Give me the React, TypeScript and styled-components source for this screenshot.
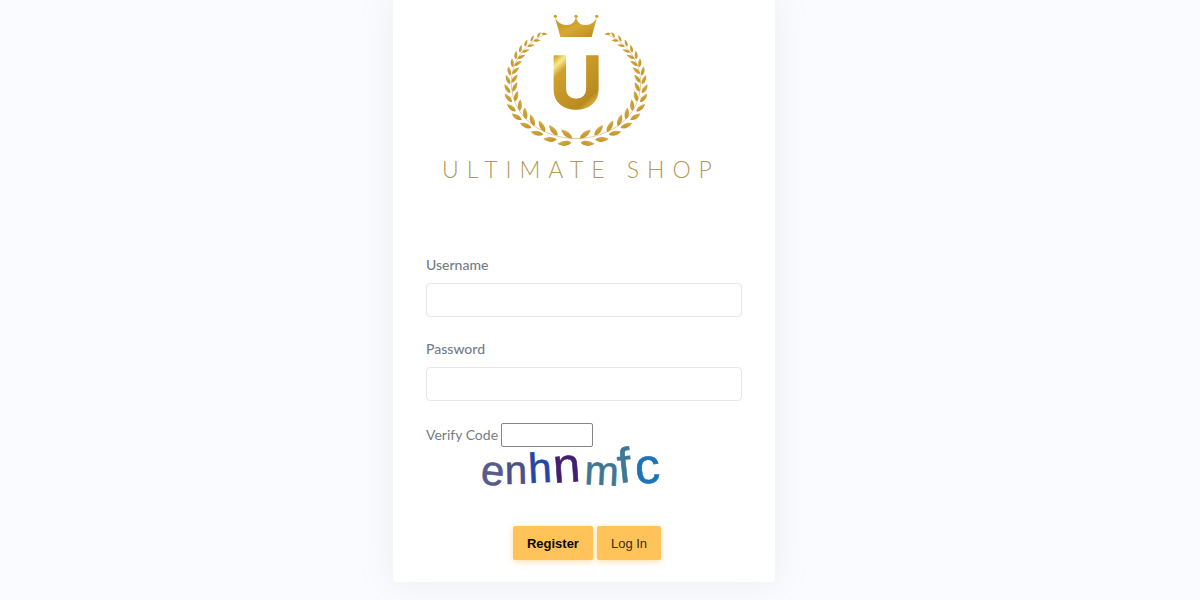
import React from "react";
import styled, { createGlobalStyle } from "styled-components";

const GlobalStyle = createGlobalStyle`
  *, *::before, *::after { box-sizing: border-box; }
  body {
    margin: 0;
    background: #fafbfe;
    color: #757d85;
    font-family: Lato, "Open Sans", sans-serif;
    font-size: 14px;
  }
`;

const Page = styled.main`
  display: flex;
  justify-content: center;
  padding: 0 32px 18px 0;
`;

const Card = styled.section`
  width: 100%;
  max-width: 382px;
  padding: 0 33px 22px;
  background: #fff;
  border-radius: 0 0 4px 4px;
  box-shadow: 0 0 35px rgba(154, 161, 171, 0.15);
`;

const Brand = styled.header`
  display: flex;
  flex-direction: column;
  align-items: center;
  max-width: 300px;
  margin-bottom: 72px;
`;

const EmblemArt = styled.svg`
  display: block;
  width: 174px;
  height: 150px;
`;

const BrandName = styled.h1`
  margin: 5px 0 0;
  padding-left: 10px;
  color: #b09a5c;
  font-family: Lato, sans-serif;
  font-size: 23px;
  font-weight: 300;
  letter-spacing: 8px;
  line-height: 28px;
  white-space: nowrap;
`;

const Field = styled.div`
  display: flex;
  flex-direction: column;
  gap: 8px;
  margin-bottom: 22px;
`;

const Label = styled.label<{ $light?: boolean }>`
  font-weight: ${(p) => (p.$light ? 400 : 500)};
  line-height: 20px;
`;

const TextInput = styled.input`
  width: 100%;
  height: 34px;
  padding: 6px 12px;
  border: 1px solid #e3e6ea;
  border-radius: 4px;
  background: #fff;
  color: #6c757d;
  font: inherit;
`;

const VerifyRow = styled.div`
  display: flex;
  align-items: center;
  gap: 3px;
`;

const CodeInput = styled.input`
  width: 92px;
  height: 24px;
  padding: 1px 4px;
  border: 1px solid #858585;
  border-radius: 2px;
  background: #fff;
  font: inherit;
`;

const CaptchaArt = styled.svg`
  display: block;
  overflow: visible;
  width: 184px;
  height: 44px;
  margin: 0 0 35px 54px;
  font-family: "Liberation Sans", Arial, sans-serif;
`;

const Actions = styled.div`
  display: flex;
  justify-content: center;
  gap: 4px;
  padding-left: 6px;
`;

const Button = styled.button<{ $strong?: boolean }>`
  height: 34px;
  padding: 0 14px;
  border: 0;
  border-radius: 2px;
  background: #ffc35a;
  box-shadow: 0 2px 6px rgba(255, 195, 90, 0.5);
  color: ${(p) => (p.$strong ? "#0c0800" : "#3a2c14")};
  font-family: "Liberation Sans", Arial, sans-serif;
  font-size: 13px;
  font-weight: ${(p) => (p.$strong ? 700 : 400)};
`;

/* Leaf centres along the left branch, from the foot of the wreath to its tip. */
const OUTER = [
  [225, 430], [182, 418], [143, 399], [109, 376], [82, 350], [66, 323], [57, 294], [54, 266],
  [56, 239], [60, 213], [69, 188], [80, 165], [94, 146], [110, 129], [129, 115], [149, 104],
];
const INNER = [
  [232, 402], [192, 391], [158, 379], [129, 361], [108, 340], [92, 315], [81, 288], [77, 261],
  [76, 236], [79, 212], [86, 190], [96, 171], [109, 153], [125, 137], [143, 122], [165, 102],
];

function leaf([x, y]: number[], index: number, turn: number) {
  const t = Math.atan2((y - 250) / 166, (x - 260) / 195);
  const angle = (Math.atan2(166 * Math.cos(t), -195 * Math.sin(t)) * 180) / Math.PI + turn;
  const h = 21 - index * 0.75;
  const w = h * 0.38;
  return (
    <path
      key={`${turn}-${index}`}
      d={`M${-h} 0C${-h * 0.6} ${-w * 1.2} ${h * 0.3} ${-w * 1.4} ${h} 0C${h * 0.3} ${w * 1.2} ${-h * 0.6} ${w * 1.2} ${-h} 0Z`}
      transform={`translate(${x} ${y}) rotate(${angle})`}
      fill="url(#leaf)"
    />
  );
}

function Branch() {
  return (
    <>
      <path d="M262 416C150 414 66 345 66 250C66 185 105 130 168 103" fill="none" stroke="#d2b566" strokeWidth="2" />
      {OUTER.map((p, i) => leaf(p, i, -12 - Math.min(i, 8) * 2))}
      {INNER.map((p, i) => leaf(p, i, 32))}
    </>
  );
}

function Emblem() {
  return (
    <EmblemArt viewBox="0 0 520 450" role="img" aria-label="Crowned letter U in a laurel wreath">
      <defs>
        <linearGradient id="leaf" x1="0" y1="0" x2="1" y2="1">
          <stop offset="0" stopColor="#c0902a" />
          <stop offset="0.6" stopColor="#cda03a" />
          <stop offset="1" stopColor="#e9cf7c" />
        </linearGradient>
        <linearGradient id="crown" x1="0" y1="0" x2="1" y2="1">
          <stop offset="0" stopColor="#b98a1f" />
          <stop offset="0.5" stopColor="#d6a934" />
          <stop offset="1" stopColor="#b98a20" />
        </linearGradient>
        <linearGradient id="letter" gradientUnits="userSpaceOnUse" x1="180" y1="170" x2="330" y2="330">
          <stop offset="0" stopColor="#c99b25" />
          <stop offset="0.07" stopColor="#d9b13f" />
          <stop offset="0.15" stopColor="#f7e98e" />
          <stop offset="0.26" stopColor="#cfa02b" />
          <stop offset="0.55" stopColor="#c49526" />
          <stop offset="0.78" stopColor="#b98a1d" />
          <stop offset="0.9" stopColor="#dcb548" />
          <stop offset="1" stopColor="#b98a1d" />
        </linearGradient>
      </defs>
      <g fill="url(#crown)">
        <path d="M213 111L197 52C204 68 218 76 232 75C248 74 257 66 260 50C263 66 272 74 288 75C302 76 316 68 323 52L307 111Z" />
        <circle cx="198" cy="49" r="5" />
        <circle cx="260" cy="49" r="5" />
        <circle cx="322" cy="49" r="5" />
      </g>
      <text
        x="260"
        y="324"
        textAnchor="middle"
        fontFamily="Inter, sans-serif"
        fontWeight="700"
        fontSize="216"
        fill="url(#letter)"
        stroke="url(#letter)"
        strokeWidth="5"
      >
        U
      </text>
      <Branch />
      <g transform="translate(520 0) scale(-1 1)">
        <Branch />
      </g>
    </EmblemArt>
  );
}

const CAPTCHA = [
  { char: "e", x: 0, y: 37, size: 42, turn: 5, color: "#565a8c" },
  { char: "n", x: 25, y: 37, size: 40, turn: -1, color: "#4d4f86" },
  { char: "h", x: 49, y: 36, size: 42, turn: -3, color: "#2446a8" },
  { char: "n", x: 74, y: 36, size: 49, turn: -4, color: "#421f73" },
  { char: "m", x: 104, y: 37, size: 41, turn: 3, color: "#417692" },
  { char: "f", x: 139, y: 36, size: 49, turn: -6, color: "#3f7896" },
  { char: "c", x: 156, y: 37, size: 50, turn: -4, color: "#1d74b5" },
];

function Captcha() {
  return (
    <CaptchaArt viewBox="0 0 184 44" role="img" aria-label="Verification code">
      {CAPTCHA.map((g, i) => (
        <text
          key={i}
          fontSize={g.size}
          fill={g.color}
          stroke={g.color}
          strokeWidth="0.6"
          transform={`translate(${g.x} ${g.y}) rotate(${g.turn})`}
        >
          {g.char}
        </text>
      ))}
    </CaptchaArt>
  );
}

export default function App() {
  return (
    <>
      <GlobalStyle />
      <Page>
        <Card>
          <Brand>
            <Emblem />
            <BrandName>ULTIMATE SHOP</BrandName>
          </Brand>
          <form onSubmit={(e) => e.preventDefault()}>
            <Field>
              <Label htmlFor="username">Username</Label>
              <TextInput id="username" type="text" autoComplete="username" />
            </Field>
            <Field>
              <Label htmlFor="password">Password</Label>
              <TextInput id="password" type="password" autoComplete="current-password" />
            </Field>
            <VerifyRow>
              <Label htmlFor="code" $light>Verify Code</Label>
              <CodeInput id="code" type="text" autoComplete="off" />
            </VerifyRow>
            <Captcha />
            <Actions>
              <Button type="button" $strong>Register</Button>
              <Button type="submit">Log In</Button>
            </Actions>
          </form>
        </Card>
      </Page>
    </>
  );
}
